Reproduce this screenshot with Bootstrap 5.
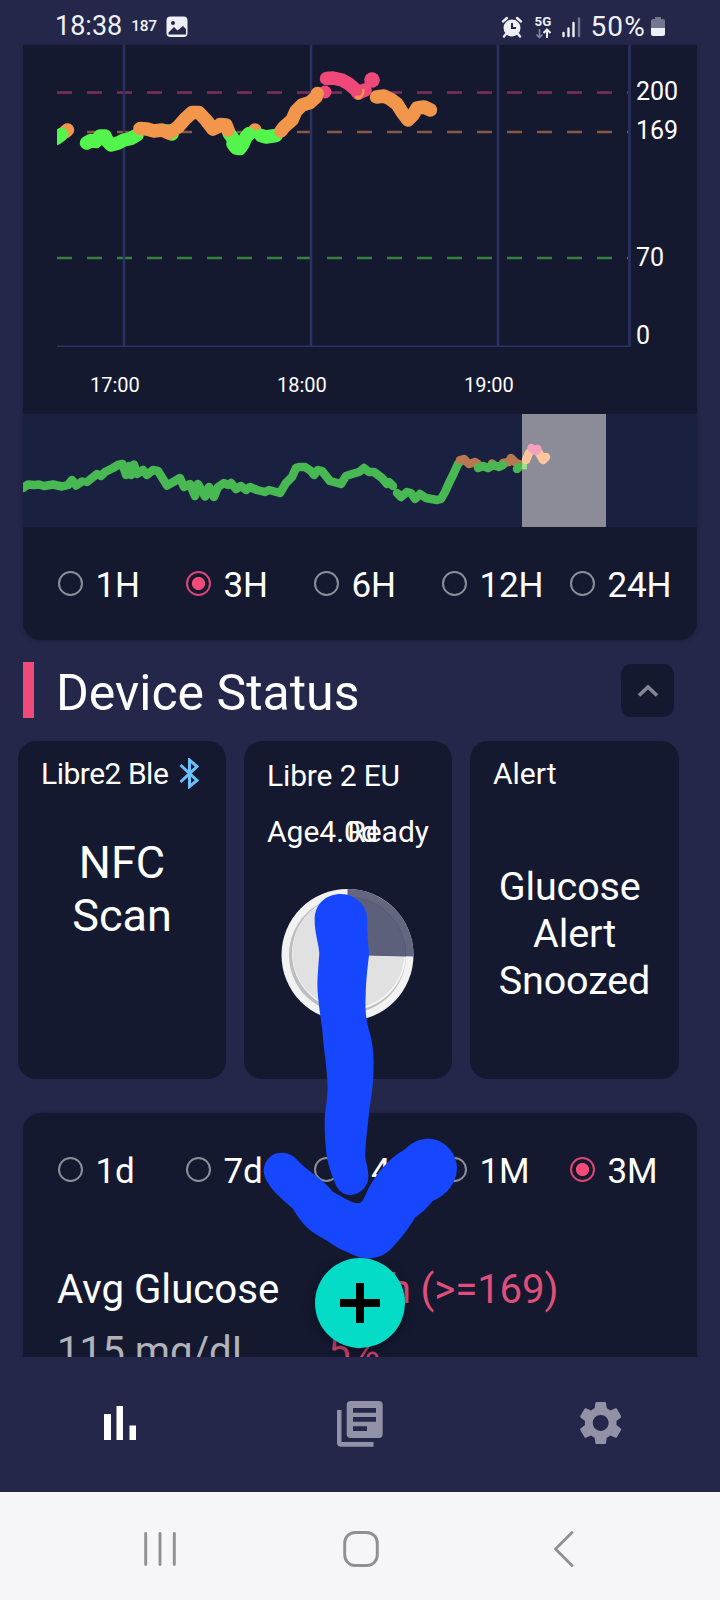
<!DOCTYPE html>
<html lang="en">
<head>
<meta charset="utf-8">
<meta name="viewport" content="width=device-width, initial-scale=1">
<title>Glucose monitor</title>
<link href="https://cdn.jsdelivr.net/npm/bootstrap@5.3.0/dist/css/bootstrap.min.css" rel="stylesheet">
<style>
  body { background:#24274a; color:#fff; font-family:Roboto,"Liberation Sans",sans-serif; width:720px; height:1600px; overflow:hidden; }
  svg { display:block; flex:none; }
  .statusbar { height:45px; padding:8px 54px 0 55px; color:#eef0f6; font-size:27px; line-height:37px; }
  .tiny187 { font-size:15.5px; font-weight:500; margin-left:9px; letter-spacing:-.3px; }
  .panel { background:#141930; margin:0 23px; width:674px; box-shadow:0 1px 4px rgba(10,12,30,.35); }
  .panel-top { border-radius:0 0 18px 18px; height:595px; }
  .panel-stats { border-radius:18px 18px 0 0; height:244px; margin-top:34px; overflow:hidden; }
  .choices { height:113px; padding-left:35px; }
  .choice { width:128px; font-size:35px; line-height:40px; white-space:nowrap; flex:none; }
  .choice span { padding-top:4px; margin-left:12.5px; letter-spacing:-.2px; }
  .ring { width:25px; height:25px; border:2px solid #8d8f98; border-radius:50%; flex:none; }
  .ring.on { border-color:#dc4673; background:radial-gradient(circle,#f34a7a 6.2px,transparent 6.9px); }
  .section { height:101px; padding:22px 46px 0 23px; }
  .accent { width:11px; height:56px; background:#f04a7a; }
  .section h2 { font-size:50px; line-height:56px; font-weight:400; margin:3px 0 0 22px; }
  .fold { width:53px; height:53px; border-radius:10px; background:#141930; margin-top:2px; }
  .devices { padding:0 41px 0 18px; gap:18px; height:338px; }
  .device { background:#141930; border-radius:18px; flex:0 0 208px; min-width:0; font-size:30px; }
  .device:last-child { flex-basis:209px; }
  .device header { height:66px; line-height:66px; padding-left:23px; white-space:nowrap; }
  .nfc { font-size:45px; line-height:53px; margin-top:29px; text-align:center; }
  .snooze { font-size:39.500px; line-height:47px; margin-top:56px; text-align:center; letter-spacing:-.15px; }
  .age { height:45px; line-height:45px; padding:0 23px 0 23px; white-space:nowrap; }
  .age span:first-child { width:0; }
  .stats { font-size:40.200px; line-height:61.5px; margin-top:33px; padding-left:34px; white-space:nowrap; }
  .stats > div { width:271px; flex:none; }
  .hi { color:#df4f7a; letter-spacing:-.1px; }
  .appnav { height:135px; background:#24274a; position:relative; }
  .sysnav { height:108px; background:#f6f6f8; }
  .fab { position:absolute; left:315px; top:1258px; width:90px; height:90px; border-radius:50%; background:#04dcc7; box-shadow:0 4px 12px rgba(0,0,0,.4); border:0; padding:0; clip-path:inset(0 -20px -9px -20px); }
  .scribble { position:absolute; left:230px; top:870px; }
</style>
</head>
<body class="position-relative">

<div class="statusbar d-flex align-items-center">
  <span>18:38</span><span class="tiny187">187</span>
  <svg style="margin-left:9px" width="22" height="22" viewBox="0 0 22 22"><rect x=".5" y=".5" width="21" height="20.5" rx="4" fill="#eef0f6"/><circle cx="7" cy="7" r="2" fill="#24274a"/><path d="M2.500 16.500 8 11l3.500 3.500L17 10l3 3v5.500H2.500Z" fill="#24274a"/></svg>
  <svg class="ms-auto" width="22" height="22" viewBox="0 0 22 22"><circle cx="11" cy="12" r="8.500" fill="#eef0f6"/><path d="M2 5.500 6 2M20 5.500 16 2M5 18l-2 2.500M17 18l2 2.500" stroke="#eef0f6" stroke-width="2.400" stroke-linecap="round"/><path d="M11 7v5h4" fill="none" stroke="#24274a" stroke-width="2"/></svg>
  <svg style="margin-left:10px" width="22" height="24" viewBox="0 0 22 24"><text x="1.500" y="11" font-size="13.300" font-weight="700" fill="#eef0f6">5G</text><path d="M6.500 14v8M3.500 19.500 6.500 22.500 9.500 19.500" fill="none" stroke="#85879b" stroke-width="1.600"/><path d="M14 23v-8M10.500 18 14 14.500 17.500 18" fill="none" stroke="#eef0f6" stroke-width="2"/></svg>
  <svg style="margin-left:6px" width="20" height="22" viewBox="0 0 20 22"><path d="M2.500 17v3M7.500 12.500v7.500M12.500 7v13" stroke="#eef0f6" stroke-width="2.400" stroke-linecap="round"/><path d="M18 2.500v17.500" stroke="#75778e" stroke-width="2.400" stroke-linecap="round"/></svg>
  <span style="margin-left:9px;font-size:28px;letter-spacing:1.200px">50%</span>
  <svg style="margin-left:4px" width="16" height="20" viewBox="0 0 16 20"><path d="M5 0h6v2h2q2 0 2 2v8H1V4q0-2 2-2h2Z" fill="#75778e"/><path d="M1 11h14v6q0 2-2 2H3q-2 0-2-2Z" fill="#eef0f6"/></svg>
</div>

<section class="panel panel-top">
  <!-- glucose over the last three hours -->
  <svg width="674" height="369" viewBox="23 45 674 369" font-size="25" fill="#fff">
    <g stroke-width="2.700" stroke-dasharray="15 15"><path d="M57 92.500H628" stroke="#7f3058"/><path d="M57 132H628" stroke="#865a44"/><path d="M57 258H628" stroke="#35813f"/></g>
    <g stroke="#2a3263" stroke-width="2.500"><path d="M124 45V346M311 45V346M498 45V346M629.500 45V347"/><path d="M57 346.300H630" stroke-width="1.600"/></g>
    <clipPath id="plot"><path d="M57 45h573v301H57Z"/></clipPath>
    <g fill="none" stroke-width="13.500" stroke-linecap="round" stroke-linejoin="round" clip-path="url(#plot)">
      <path stroke="#f1964b" d="M67.500 130 65 132"/>
      <path stroke="#53f54c" d="M61.500 134.500 56 138.500"/>
      <path stroke="#53f54c" d="M86.500 143 91 140.500 96 141.500 100 136 105 136 108 142 111 145 117 143.500 124 140 131 138.500 137 135M172 134 168 131"/>
      <path stroke="#53f54c" d="M229 133 234 140 233 144 236 148 240 148.500 243 144 246 137 249.500 133.500"/>
      <path stroke="#f1964b" d="M140 128.500 147 129 154 131 162 130 169 133 178 127 185 119 192 112.500 199 112.500 206 120 213 129 219 126 220 124.500 226 125 228 130M255 130H254.900"/>
      <path stroke="#53f54c" d="M248.500 134 249 134M261 135.500 266 137 276 135.500"/>
      <path stroke="#f1964b" d="M281 131 284 127 292 120 296 111 302 105 310 102.500 316 97 317.500 93.500"/>
      <path stroke="#f1487a" d="M326.500 78.500 333 78 342 80 349 84 356 90 358 93 365 90"/><circle cx="325" cy="92" r="6.500" fill="#f1487a" stroke="none"/><circle cx="372" cy="80" r="7.800" fill="#f1487a" stroke="none"/>
      <path stroke="#f1964b" stroke-width="2.500" d="M358 98Q363 97 363.500 90"/><path stroke="#f1964b" stroke-width="4" d="M357 97.500H360"/>
      <circle cx="317.500" cy="93.500" r="6.500" fill="#f1964b" stroke="none"/>
      <path stroke="#f1964b" d="M376.500 97 384 96 391 99.500 397 104 402 112 408 120 413 115 417 108 424 107 430.500 110"/>
    </g>
    <text x="636" y="99.500">200</text><text x="636" y="139.300">169</text><text x="636" y="265.500">70</text><text x="636" y="343.500">0</text>
    <g font-size="20"><text x="90" y="392">17:00</text><text x="277" y="392">18:00</text><text x="464" y="392">19:00</text></g>
  </svg>
  <!-- overview strip with the selected window -->
  <svg width="674" height="113" viewBox="23 414 674 113">
    <path fill="#1a2040" d="M23 414h674v113H23Z"/>
    <path fill="#8b8c98" d="M522 414h84v113h-84Z"/>
    <g fill="none" stroke-width="8.500" stroke-linecap="round" stroke-linejoin="round">
      <path stroke="#48b853" d="M23 488 28 484.500 34 485 39 484.500 44 486 53 484.500 62 486.500 68 485 72 480 76 485.500 82 481.500M87 482 92 478 97 474 101 476 105 472 113 468 118 465 122.500 464 126 475 129 466 131 475 134 464.500 137 474 143 470 147 475 153 470 158 471 163 479 167 485.500 175 481 180 478 184 487 190 484 195 496 198 484 205 496.500 209 487 214 497 218 487 224 483 228 485 231 483 236 489 241 486 246 490 250 487 257 490 265 492 269 490 280 493 286 483 292 477 296 468 299 467 305 467 311 471 314 475 318 470 322 471 326 476 330 481 341 484 346 476 352 474 359 472 364 468 369 472 374 472 382 478 387 484 389 482 393 486"/>
      <path stroke="#48b853" d="M397 493 401 497 407 492 411 493 415 499 420 494 426 498 437 500 441 499 445 492 449 483 453 475 458 464 461 461"/>
      <path stroke="#b87950" d="M460 460 464 459 469 464 475 462 478 464M492 463.500 493 464M503 463 509 462 511 458 516 463 519 464"/>
      <path stroke="#48b853" d="M478 468 483 466 488 468 493 465 499 467 503 465M517 469 519 467"/>
      <path stroke="#97e28e" stroke-linecap="butt" d="M522 465H527"/>
      <path stroke="#ffc69b" d="M526 460 529 453M539 453 543 460 546 457"/>
      <path stroke="#f5a0bd" d="M531.500 448 534 450 536 451 537.500 449"/>
    </g>
  </svg>
  <div class="choices d-flex align-items-center">
    <div class="choice d-flex align-items-center"><i class="ring"></i><span>1H</span></div>
    <div class="choice d-flex align-items-center"><i class="ring on"></i><span>3H</span></div>
    <div class="choice d-flex align-items-center"><i class="ring"></i><span>6H</span></div>
    <div class="choice d-flex align-items-center"><i class="ring"></i><span>12H</span></div>
    <div class="choice d-flex align-items-center"><i class="ring"></i><span>24H</span></div>
  </div>
</section>

<div class="section d-flex align-items-start">
  <div class="accent"></div>
  <h2>Device Status</h2>
  <div class="fold ms-auto d-flex align-items-center justify-content-center">
    <svg width="24" height="16" viewBox="0 0 24 16"><path d="M3 12.500 12 4l9 8.500" fill="none" stroke="#85878f" stroke-width="3.600"/></svg>
  </div>
</div>

<div class="devices d-flex">
  <article class="device">
    <header class="d-flex align-items-center"><span style="letter-spacing:-.5px">Libre2 Ble</span>
      <svg style="margin-left:11px;margin-bottom:1px" width="20" height="31" viewBox="0 0 20 31"><path d="M1.500 7 18 22.500 10.500 28.500V2L18 8.500 1.500 24" fill="none" stroke="#6cc0fb" stroke-width="3"/></svg>
    </header>
    <div class="nfc">NFC<br>Scan</div>
  </article>
  <article class="device">
    <header style="height:68px;line-height:70px;letter-spacing:-.15px">Libre 2 EU</header>
    <div class="age d-flex"><span>Age4.0d</span><span class="ms-auto">Ready</span></div>
    <svg class="mx-auto" style="margin-top:34px" width="134" height="134" viewBox="0 0 134 134">
      <circle cx="66.500" cy="67" r="66" fill="#f2f2f3"/>
      <circle cx="66.500" cy="67" r="58.500" fill="#bdbdbf"/>
      <circle cx="68" cy="65.500" r="57" fill="#f8f8f8"/>
      <circle cx="67.500" cy="65" r="56" fill="#e1e1e2"/>
      <path d="M66.500 1a66 66 0 0 1 66 67.500L66.500 66.500Z" fill="#64667f"/>
      <path d="M66.500 9a58 58 0 0 1 58.500 59L66.500 66.500Z" fill="#5d607a" stroke="#555873" stroke-width=".8"/>
    </svg>
  </article>
  <article class="device">
    <header>Alert</header>
    <div class="snooze">Glucose&nbsp;<br>Alert<br>Snoozed</div>
  </article>
</div>

<section class="panel panel-stats">
  <div class="choices d-flex align-items-center">
    <div class="choice d-flex align-items-center"><i class="ring"></i><span>1d</span></div>
    <div class="choice d-flex align-items-center"><i class="ring"></i><span>7d</span></div>
    <div class="choice d-flex align-items-center"><i class="ring"></i><span>14d</span></div>
    <div class="choice d-flex align-items-center"><i class="ring"></i><span>1M</span></div>
    <div class="choice d-flex align-items-center"><i class="ring on"></i><span>3M</span></div>
  </div>
  <div class="stats d-flex">
    <div>Avg Glucose<br><span style="color:#b1b2ba">115 mg/dL</span></div>
    <div class="hi">High (&gt;=169)<br><span style="color:#cf446e">5%</span></div>
  </div>
</section>

<nav class="appnav">
  <svg width="720" height="135" viewBox="0 1357 720 135">
    <path fill="#fff" d="M104 1414h7v26h-7ZM116.500 1406h6.500v34h-6.500ZM129.500 1425.500h6.500v14.500h-6.500Z"/>
    <g fill="#9192a5"><rect x="346.700" y="1401" width="36" height="37" rx="4"/><path d="M337 1410h4.500v32h32v4.700h-32.500q-4 0-4-4Z"/>
    <path transform="translate(574.300 1396.600) scale(2.200)" d="M19.140 12.940c.04-.3.06-.61.06-.94 0-.32-.02-.64-.07-.94l2.030-1.580c.18-.14.23-.41.12-.61l-1.920-3.320c-.12-.22-.37-.29-.59-.22l-2.390.96c-.5-.38-1.030-.7-1.620-.94l-.36-2.540c-.04-.24-.24-.41-.48-.41h-3.840c-.24 0-.43.17-.47.41l-.36 2.540c-.59.24-1.130.57-1.620.94l-2.390-.96c-.22-.08-.47 0-.59.22L2.740 8.870c-.12.21-.08.47.12.61l2.030 1.580c-.05.3-.09.63-.09.94s.02.64.07.94l-2.030 1.580c-.18.14-.23.41-.12.61l1.920 3.320c.12.22.37.29.59.22l2.390-.96c.5.38 1.030.7 1.620.94l.36 2.540c.05.24.24.41.48.41h3.840c.24 0 .44-.17.47-.41l.36-2.540c.59-.24 1.130-.56 1.620-.94l2.390.96c.22.08.47 0 .59-.22l1.920-3.320c.12-.22.07-.47-.12-.61l-2.010-1.580zM12 15.600c-1.980 0-3.600-1.620-3.600-3.600s1.620-3.600 3.600-3.600 3.600 1.620 3.600 3.600-1.620 3.600-3.600 3.600z"/></g>
    <path fill="#24274a" d="M353 1408h23v4.700h-23ZM353 1417h23v4.700h-23ZM353 1426.300h14v4.700h-14Z"/>
  </svg>
</nav>
<div class="sysnav">
  <svg width="720" height="108" viewBox="0 1492 720 108" fill="none" stroke="#909090" stroke-width="2.900" stroke-linecap="round" stroke-linejoin="round">
    <path d="M145.700 1533.500v31M160 1533.500v31M174.300 1533.500v31"/>
    <rect x="344.700" y="1532.500" width="32.600" height="33" rx="10.500"/>
    <path d="M572 1532.500 555.500 1549 572 1565.500"/>
  </svg>
</div>

<!-- hand-drawn arrow pointing at the add button -->
<svg class="scribble" width="240" height="400" viewBox="0 0 720 1200" fill="#1647ff">
  <path d="M254 150C254 100 290 72 333 72C375 72 412 105 412 150C411 200 417 235 417 255C413 290 408 330 407 380C404 430 412 465 420 490C430 530 432 560 430 620C428 660 422 690 418 720C412 780 405 830 406 865C410 885 416 900 415 925C412 955 385 975 362 975C330 975 318 950 312 930C295 890 290 860 288 840C284 800 283 760 285 730C292 690 294 660 292 630C288 570 280 530 277 480C270 430 262 380 262 340C264 300 266 280 268 250C266 220 254 190 254 150Z"/>
  <path d="M101 900C103 870 125 848 155 848C185 848 198 866 218 886C250 915 280 930 308 965C335 978 360 998 385 1000C395 998 400 990 405 978C430 920 470 870 525 838C550 812 575 806 597 806C645 808 681 850 681 895C680 940 650 975 608 993C590 1015 575 1030 556 1042C530 1085 500 1120 480 1140C460 1157 440 1165 410 1165C390 1165 370 1155 350 1145C320 1135 300 1115 270 1100C230 1080 205 1045 188 1015C160 990 101 945 101 900Z"/>
</svg>
<button class="fab" aria-label="Add">
  <svg width="90" height="90" viewBox="0 0 90 90"><path d="M25 45h40M45 25v40" stroke="#000" stroke-width="8"/></svg>
</button>

<script src="https://cdn.jsdelivr.net/npm/bootstrap@5.3.0/dist/js/bootstrap.bundle.min.js"></script>
</body>
</html>
